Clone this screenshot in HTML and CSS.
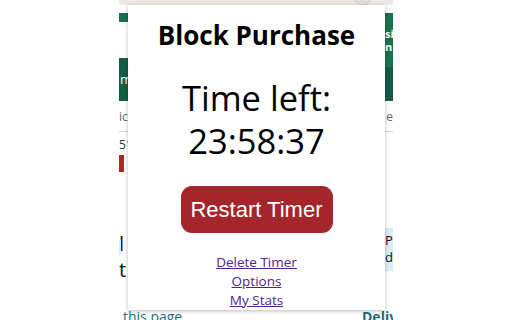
FILE: index.html
```html
<!DOCTYPE html>
<html>
<head>
<meta charset="utf-8">
<link rel="stylesheet" href="styles.css">
</head>
<body>
<div class="stage">
  <div class="page">
    <div class="topbar"><span class="knob"></span></div>
    <div class="header">
      <div class="hleft">
        <div class="gbar"></div>
        <div class="gbtn">m</div>
      </div>
      <div class="hright">
        <div class="gtop">si<br>n</div>
        <div class="gbot"></div>
      </div>
    </div>
    <div class="row sub"><span>ic</span><span>e</span></div>
    <div class="rule"></div>
    <div class="row price"><span>51</span></div>
    <div class="redtag"></div>
    <div class="mid">
      <div class="midleft"><span class="big">l</span><span class="big">t</span></div>
      <div class="midright"><span>P</span><span>d</span></div>
    </div>
    <div class="row foot"><span class="tp">this page</span><span class="dl">Deliv</span></div>
  </div>
  <div class="popup">
    <h1 class="title">Block Purchase</h1>
    <div class="timer">Time left:<br>23:58:37</div>
    <button class="restart">Restart Timer</button>
    <div class="links">
      <a href="#" class="link">Delete Timer</a>
      <a href="#" class="link">Options</a>
      <a href="#" class="link">My Stats</a>
    </div>
  </div>
</div>
</body>
</html>
```
FILE: styles.css
```css
html, body {
  margin: 0;
  padding: 0;
  background: #ffffff;
}
.stage {
  position: relative;
  width: 512px;
  height: 320px;
  overflow: hidden;
  font-family: "Open Sans", "Noto Sans", sans-serif;
}
.page {
  margin-left: 119px;
  width: 274px;
  height: 320px;
  background: #ffffff;
  display: flex;
  flex-direction: column;
}
.topbar {
  height: 5px;
  background: #eee7e4;
  position: relative;
  flex: none;
}
.knob {
  position: absolute;
  left: 233px;
  top: -15px;
  width: 19px;
  height: 18px;
  border-radius: 50%;
  background: #e2dedc;
  border: 1px solid #d3cfcd;
}
.header {
  margin-top: 8px;
  height: 88px;
  display: flex;
  justify-content: space-between;
  flex: none;
}
.hleft {
  width: 9px;
  display: flex;
  flex-direction: column;
}
.gbar {
  height: 9px;
  background: #16704f;
}
.gbtn {
  margin-top: 36px;
  height: 43px;
  background: #125f45;
  color: #fff;
  font-size: 13px;
  line-height: 43px;
  text-indent: 1px;
  overflow: hidden;
}
.hright {
  width: 8px;
  display: flex;
  flex-direction: column;
  overflow: hidden;
}
.gtop {
  height: 54px;
  background: #18744f;
  color: #fff;
  font-size: 11px;
  font-weight: 700;
  line-height: 13px;
  padding-top: 14px;
  box-sizing: border-box;
  white-space: nowrap;
}
.gbot {
  flex: 1;
  background: #125d47;
}
.row {
  display: flex;
  justify-content: space-between;
  flex: none;
}
.sub {
  margin-top: 8px;
  height: 16px;
  font-size: 12px;
  line-height: 16px;
  color: #666;
}
.rule {
  margin-top: 6px;
  height: 1px;
  background: #d6d6d6;
  flex: none;
}
.price {
  margin-top: 5px;
  height: 16px;
  font-size: 12px;
  line-height: 16px;
  color: #333;
}
.redtag {
  margin-top: 2px;
  width: 5px;
  height: 17px;
  background: #b3261e;
  flex: none;
}
.mid {
  margin-top: 56px;
  height: 54px;
  display: flex;
  justify-content: space-between;
  align-items: flex-start;
  flex: none;
}
.midleft {
  width: 9px;
  padding-top: 3px;
  display: flex;
  flex-direction: column;
  font-size: 20px;
  line-height: 26px;
  color: #111;
  overflow: hidden;
  position: relative;
}
.midleft::before {
  content: "";
  position: absolute;
  left: 0;
  top: 12px;
  width: 2px;
  height: 15px;
  background: #d9eef7;
}
.midright {
  width: 8px;
  height: 43px;
  background: #d9eef6;
  display: flex;
  flex-direction: column;
  font-size: 13px;
  line-height: 17px;
  padding-top: 4px;
  box-sizing: border-box;
  color: #111;
  overflow: hidden;
}
.foot {
  margin-top: 27px;
  font-size: 14px;
  line-height: 16px;
  color: #1f6a80;
}
.tp {
  margin-left: 4px;
}
.dl {
  font-weight: 700;
  width: 31px;
  overflow: hidden;
  white-space: nowrap;
}
.popup {
  position: absolute;
  left: 128px;
  top: 5px;
  width: 257px;
  height: 305px;
  background: #ffffff;
  box-shadow: 0 1px 4px rgba(0, 0, 0, 0.28);
  display: flex;
  flex-direction: column;
  align-items: center;
  color: #000;
}
.title {
  margin: 14px 0 0;
  font-size: 26px;
  font-weight: 700;
  line-height: 32px;
}
.timer {
  margin-top: 25px;
  font-size: 34.5px;
  line-height: 43px;
  text-align: center;
}
.restart {
  margin-top: 24px;
  width: 152px;
  height: 47px;
  border: none;
  border-radius: 11px;
  background: #a4262c;
  color: #fff;
  font-family: "Liberation Sans", Arial, sans-serif;
  font-size: 22px;
  padding: 0;
}
.links {
  margin-top: 20px;
  display: flex;
  flex-direction: column;
  align-items: center;
  font-size: 13.5px;
  line-height: 19px;
}
.link {
  color: #55228b;
  text-decoration: underline;
}
```
